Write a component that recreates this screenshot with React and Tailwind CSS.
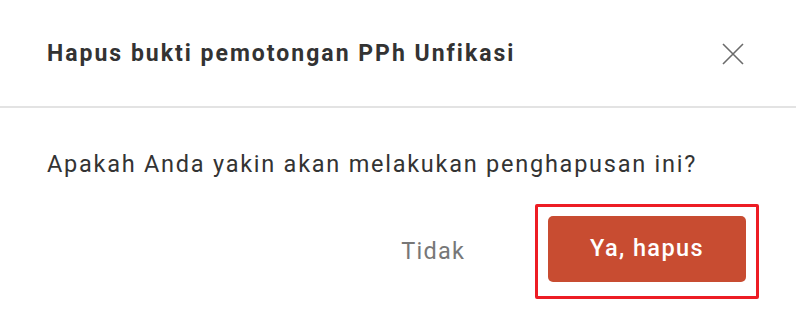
import React from "react";

export default function App() {
  return (
    <div className="w-[796px] h-[314px] bg-white overflow-hidden" style={{ fontFamily: "Roboto, 'Noto Sans', sans-serif" }}>
      <div className="h-[106px] flex items-center justify-between pl-[47px] pr-[52px]">
        <h1 className="text-[23px] font-bold text-[#333333] tracking-[2px] pt-[2px]">Hapus bukti pemotongan PPh Unfikasi</h1>
        <svg width="22" height="22" viewBox="0 0 22 22" className="text-[#6b6b6b] mt-[2px]">
          <path d="M1 1L21 21M21 1L1 21" stroke="currentColor" strokeWidth="1.6" fill="none" />
        </svg>
      </div>
      <div className="h-[2px] bg-[#e3e3e3]" />
      <div className="pl-[47px] pt-[40px]">
        <p className="text-[23.5px] leading-[32px] text-[#333333] tracking-[1.75px]">Apakah Anda yakin akan melakukan penghapusan ini?</p>
      </div>
      <div className="flex items-center justify-end pr-[37px] mt-[24px] gap-[70px]">
        <span className="text-[23.5px] text-[#777777] tracking-[1.2px]">Tidak</span>
        <div className="border-[3px] border-[#ed1c24] rounded-[2px] px-[10px] pt-[9px] pb-[14px]">
          <button className="w-[198px] h-[66px] rounded-[5px] bg-[#c84c31] text-white text-[23.5px] font-medium tracking-[1.4px]">Ya, hapus</button>
        </div>
      </div>
    </div>
  );
}
